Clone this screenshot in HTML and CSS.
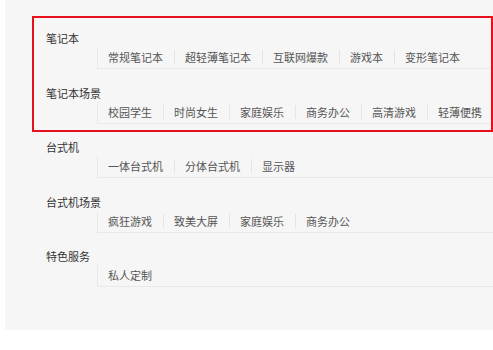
FILE: index.html
```html
<!DOCTYPE html>
<html lang="zh-CN">
<head>
<meta charset="utf-8">
<title>分类</title>
<link rel="stylesheet" href="styles.css">
</head>
<body>
<div class="panel">
  <div class="group">
    <div class="label">笔记本</div>
    <div class="items">
      <span class="item">常规笔记本</span>
      <span class="item">超轻薄笔记本</span>
      <span class="item">互联网爆款</span>
      <span class="item">游戏本</span>
      <span class="item">变形笔记本</span>
    </div>
  </div>
  <div class="group">
    <div class="label">笔记本场景</div>
    <div class="items">
      <span class="item">校园学生</span>
      <span class="item">时尚女生</span>
      <span class="item">家庭娱乐</span>
      <span class="item">商务办公</span>
      <span class="item">高清游戏</span>
      <span class="item">轻薄便携</span>
    </div>
  </div>
  <div class="group">
    <div class="label">台式机</div>
    <div class="items">
      <span class="item">一体台式机</span>
      <span class="item">分体台式机</span>
      <span class="item">显示器</span>
    </div>
  </div>
  <div class="group">
    <div class="label">台式机场景</div>
    <div class="items">
      <span class="item">疯狂游戏</span>
      <span class="item">致美大屏</span>
      <span class="item">家庭娱乐</span>
      <span class="item">商务办公</span>
    </div>
  </div>
  <div class="group">
    <div class="label">特色服务</div>
    <div class="items">
      <span class="item">私人定制</span>
    </div>
  </div>
  <div class="highlight"></div>
</div>
</body>
</html>
```

FILE: styles.css
```css
html, body {
  margin: 0;
  padding: 0;
  background: #ffffff;
}

body {
  font-family: "Noto Sans CJK SC", "Noto Sans", sans-serif;
  font-size: 11px;
  overflow: hidden;
}

.panel {
  position: relative;
  margin-left: 5px;
  height: 330px;
  padding-top: 31px;
  box-sizing: border-box;
  background: #f6f6f6;
  display: flex;
  flex-direction: column;
  gap: 16.5px;
}

.group {
  padding-left: 41px;
}

.label {
  line-height: 14px;
  height: 14px;
  color: #333333;
  white-space: nowrap;
}

.items {
  display: flex;
  margin-left: 51px;
  margin-top: 2px;
  padding: 3px 0 4px;
  border-left: 1px solid #e9e9e9;
  border-bottom: 1px solid #e9e9e9;
  white-space: nowrap;
}

.item {
  line-height: 14px;
  padding: 0 11px 0 10px;
  border-left: 1px solid #e4e4e4;
  color: #555555;
}

.item:first-child {
  border-left: none;
}

.highlight {
  position: absolute;
  left: 27px;
  top: 16px;
  width: 461px;
  height: 116px;
  border: 2.5px solid #e8101c;
  box-sizing: border-box;
  pointer-events: none;
}
```
